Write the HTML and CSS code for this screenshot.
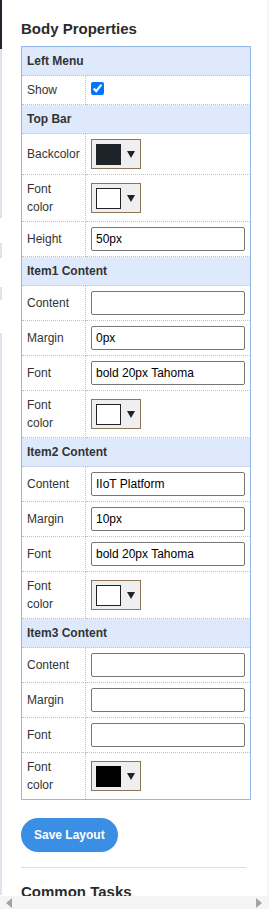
FILE: index.html
```html
<!DOCTYPE html>
<html lang="en">
<head>
  <meta charset="UTF-8">
  <meta name="viewport" content="width=device-width, initial-scale=1.0">
  <title>Body Properties</title>

  <link rel="stylesheet" href="styles.css">
</head>
<body>
  <div class="page">
    <div class="edge">
      <span class="edge-dark"></span>
      <span class="edge-seg seg-1"></span>
      <span class="edge-seg seg-2"></span>
      <span class="edge-seg seg-3"></span>
      <span class="edge-seg seg-4"></span>
    </div>

    <div class="panel">
      <h3 class="panel-title">Body Properties</h3>

      <table class="props">
        <colgroup>
          <col class="col-label">
          <col>
        </colgroup>
        <tr class="group"><td colspan="2">Left Menu</td></tr>
        <tr>
          <td class="label">Show</td>
          <td><input type="checkbox" checked></td>
        </tr>

        <tr class="group"><td colspan="2">Top Bar</td></tr>
        <tr>
          <td class="label">Backcolor</td>
          <td><button class="color-pick"><span class="swatch dark"></span><span class="caret"></span></button></td>
        </tr>
        <tr>
          <td class="label">Font color</td>
          <td><button class="color-pick"><span class="swatch light"></span><span class="caret"></span></button></td>
        </tr>
        <tr>
          <td class="label">Height</td>
          <td><input type="text" value="50px"></td>
        </tr>

        <tr class="group"><td colspan="2">Item1 Content</td></tr>
        <tr>
          <td class="label">Content</td>
          <td><input type="text" value=""></td>
        </tr>
        <tr>
          <td class="label">Margin</td>
          <td><input type="text" value="0px"></td>
        </tr>
        <tr>
          <td class="label">Font</td>
          <td><input type="text" value="bold 20px Tahoma"></td>
        </tr>
        <tr>
          <td class="label">Font color</td>
          <td><button class="color-pick"><span class="swatch light"></span><span class="caret"></span></button></td>
        </tr>

        <tr class="group"><td colspan="2">Item2 Content</td></tr>
        <tr>
          <td class="label">Content</td>
          <td><input type="text" value="IIoT Platform"></td>
        </tr>
        <tr>
          <td class="label">Margin</td>
          <td><input type="text" value="10px"></td>
        </tr>
        <tr>
          <td class="label">Font</td>
          <td><input type="text" value="bold 20px Tahoma"></td>
        </tr>
        <tr>
          <td class="label">Font color</td>
          <td><button class="color-pick"><span class="swatch light"></span><span class="caret"></span></button></td>
        </tr>

        <tr class="group"><td colspan="2">Item3 Content</td></tr>
        <tr>
          <td class="label">Content</td>
          <td><input type="text" value=""></td>
        </tr>
        <tr>
          <td class="label">Margin</td>
          <td><input type="text" value=""></td>
        </tr>
        <tr>
          <td class="label">Font</td>
          <td><input type="text" value=""></td>
        </tr>
        <tr>
          <td class="label">Font color</td>
          <td><button class="color-pick"><span class="swatch black"></span><span class="caret"></span></button></td>
        </tr>
      </table>

      <button class="save-btn">Save Layout</button>
      <hr class="divider">
      <h3 class="panel-title tasks">Common Tasks</h3>
    </div>
  </div>

  <!-- scrollbars of the host frame -->
  <div class="vtrack"></div>
  <div class="hscroll">
    <span class="arrow left"></span>
    <span class="arrow right"></span>
  </div>
</body>
</html>
```

FILE: styles.css
```css
body {
  margin: 0;
  background: #fff;
  font-family: "Liberation Sans", Arial, sans-serif;
  color: #333;
  overflow: hidden;
}

.page {
  display: flex;
  align-items: flex-start;
}

/* left edge of the neighbouring pane */
.edge {
  display: flex;
  flex-direction: column;
  width: 2px;
  flex: none;
}

.edge-dark {
  height: 49px;
  background: #1f2630;
}

.edge-seg {
  background: #dde4ed;
}

.seg-1 { height: 169px; }
.seg-2 { height: 15px; margin-top: 25px; }
.seg-3 { height: 13px; margin-top: 29px; }
.seg-4 { height: 562px; margin-top: 33px; }

.panel {
  padding-left: 19px;
  width: 230px;
}

.panel-title {
  margin: 20px 0 8px;
  font-size: 15px;
  line-height: 18px;
  font-weight: bold;
  color: #2b2b2b;
}

.panel-title.tasks {
  margin-top: 15px;
}

.props {
  width: 230px;
  border-collapse: collapse;
  border: 1px solid #93b7e8;
  table-layout: fixed;
}

.col-label {
  width: 64px;
}

.props td {
  padding: 5px;
  font-size: 12px;
  line-height: 18px;
  color: #333;
  vertical-align: middle;
  border-bottom: 1px dotted #c2c2c2;
}

.props td.label {
  border-right: 1px dotted #c2c2c2;
}

.props .group td {
  background: #deeafc;
  font-weight: bold;
}

.props input[type="checkbox"] {
  margin: 0;
  width: 13px;
  height: 13px;
  vertical-align: top;
  margin-top: 1px;
}

.props input[type="text"] {
  display: block;
  box-sizing: border-box;
  width: 100%;
  height: 24px;
  padding: 0 4px;
  border: 1px solid #767676;
  border-radius: 2px;
  font: 12px "Liberation Sans", Arial, sans-serif;
  color: #000;
}

.color-pick {
  display: flex;
  align-items: center;
  box-sizing: border-box;
  width: 50px;
  height: 30px;
  padding: 0 4px;
  border: 1px solid #8d7558;
  border-radius: 0;
  background: #efefef;
}

.swatch {
  box-sizing: border-box;
  width: 25px;
  height: 21px;
}

.swatch.dark { background: #1e2329; }
.swatch.light { background: #fff; border: 1px solid #222; }
.swatch.black { background: #000; }

.caret {
  margin-left: 6px;
  width: 0;
  height: 0;
  border-left: 4px solid transparent;
  border-right: 4px solid transparent;
  border-top: 7px solid #222;
}

.save-btn {
  display: block;
  margin-top: 18px;
  height: 34px;
  padding: 0 13px;
  border: none;
  border-radius: 17px;
  background: #3a8ee3;
  color: #fff;
  font: bold 12px "Liberation Sans", Arial, sans-serif;
}

.divider {
  margin: 15px 5px 0 0;
  border: 0;
  border-top: 1px solid #ddd;
}

.vtrack {
  position: fixed;
  top: 0;
  right: 0;
  bottom: 0;
  width: 2px;
  background: #f6f6f6;
}

.hscroll {
  position: fixed;
  left: 0;
  right: 0;
  bottom: 0;
  height: 13px;
  background: #f5f5f5;
  display: flex;
  justify-content: space-between;
  align-items: center;
  padding: 0 7px 0 6px;
}

.arrow {
  width: 0;
  height: 0;
  border-top: 5px solid transparent;
  border-bottom: 5px solid transparent;
}

.arrow.left { border-right: 6px solid #a3a3a3; }
.arrow.right { border-left: 6px solid #a3a3a3; }
```
